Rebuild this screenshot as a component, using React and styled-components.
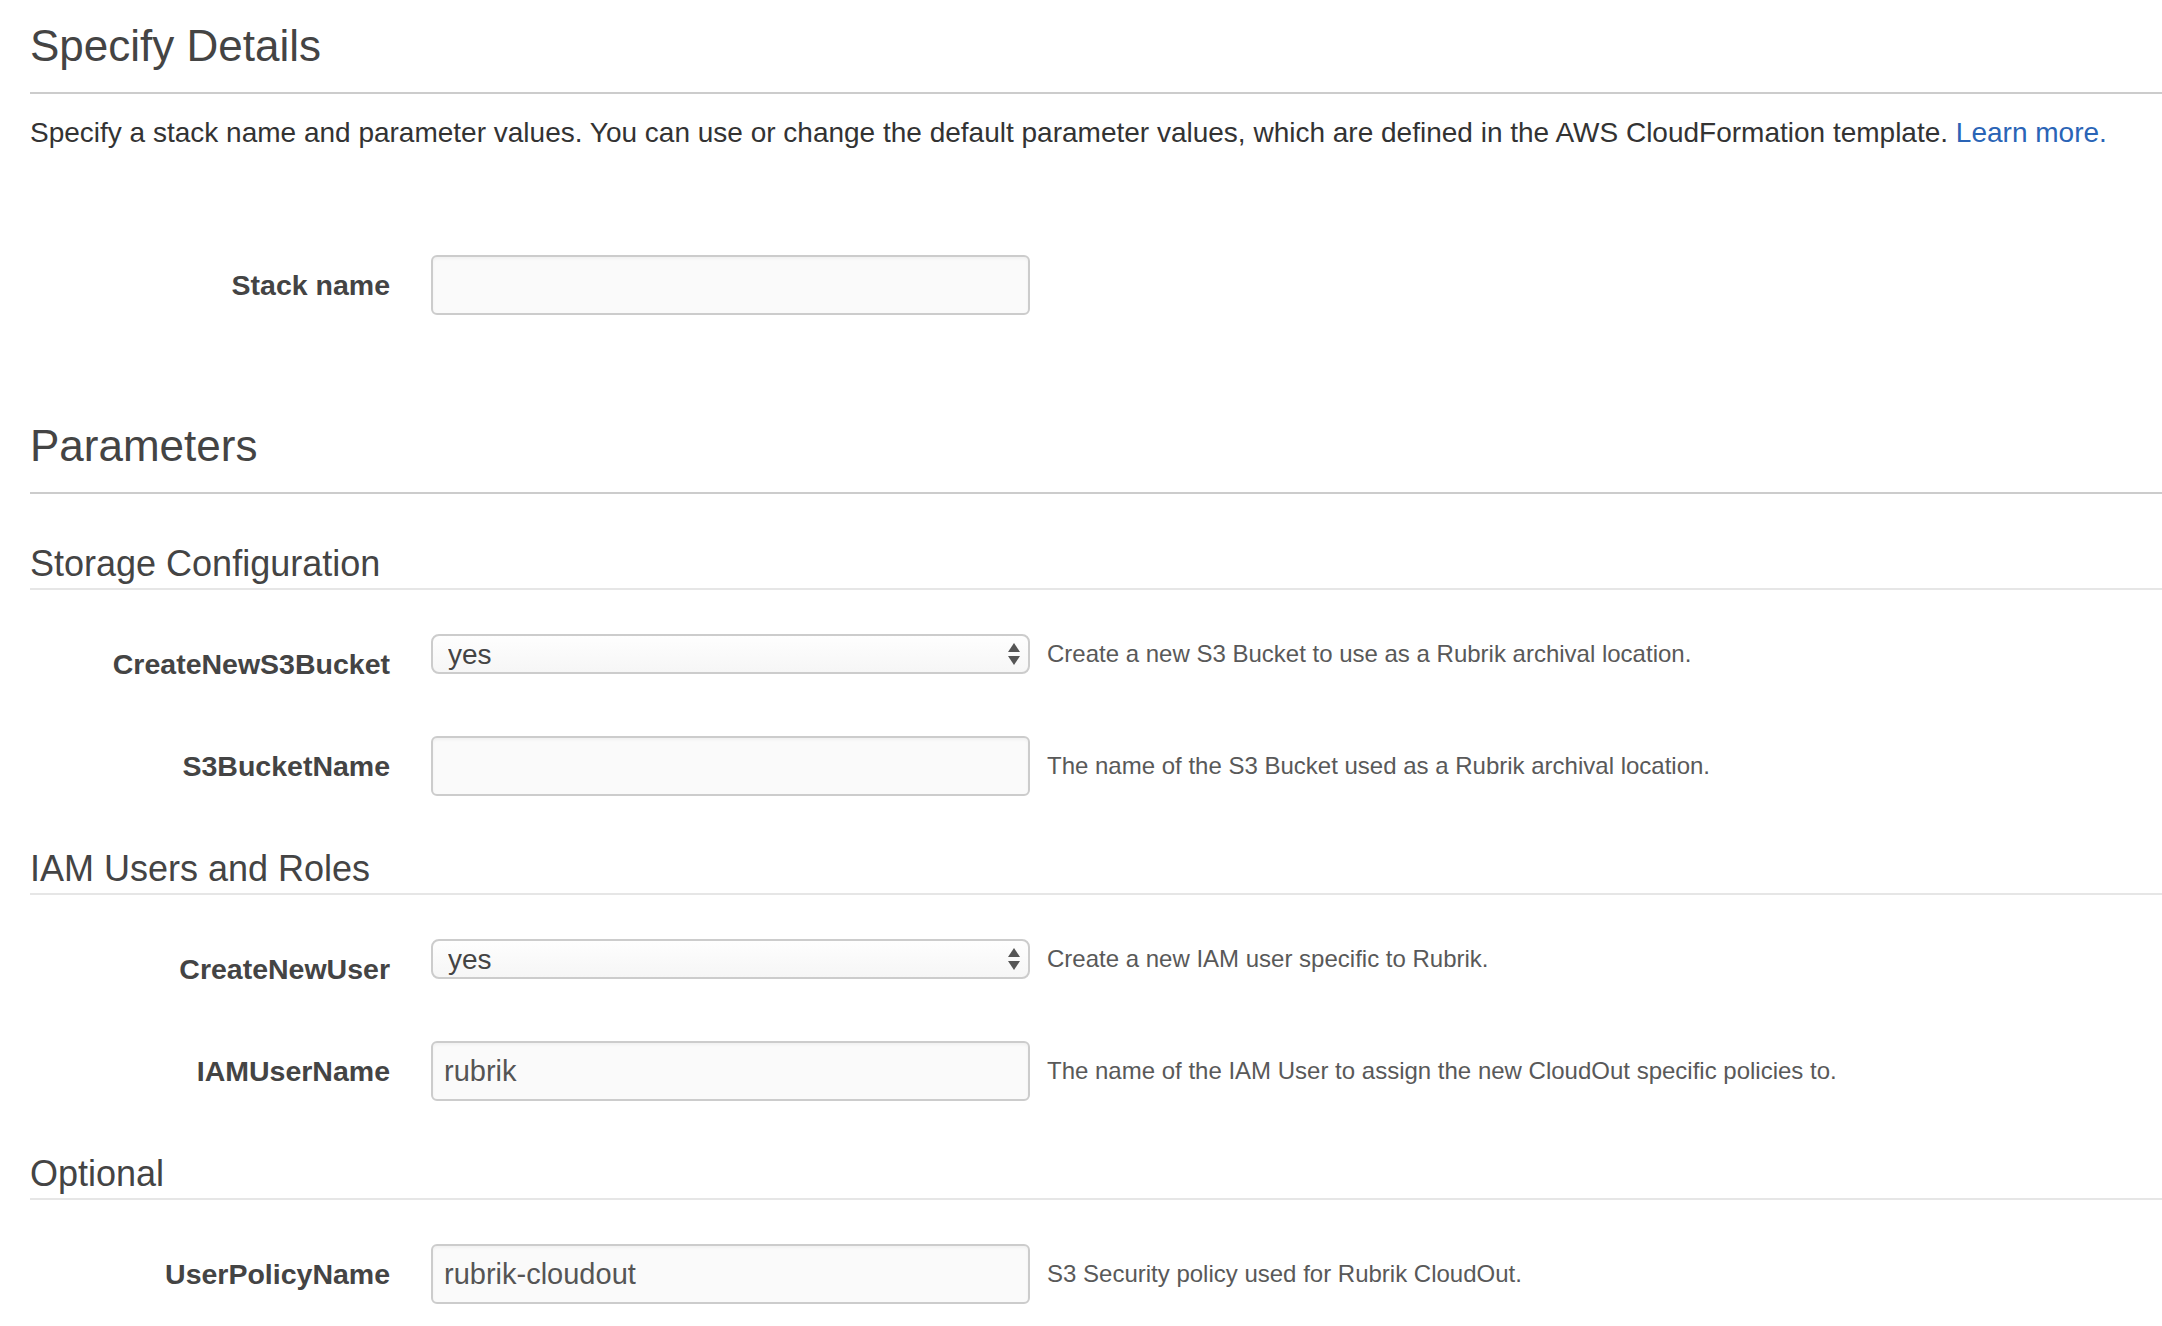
import styled, { createGlobalStyle } from "styled-components";

const GlobalStyle = createGlobalStyle`
  html, body {
    margin: 0;
    padding: 0;
    background: #ffffff;
  }
  body {
    font-family: "Liberation Sans", Arial, Helvetica, sans-serif;
    color: #333;
  }
`;

const Page = styled.main`
  padding: 21px 0 40px 30px;
`;

const SectionTitle = styled.h2`
  margin: ${(p) => p.$top || 0}px 0 0 0;
  padding-bottom: 21px;
  font-size: 44px;
  font-weight: normal;
  line-height: 50px;
  color: #444;
  border-bottom: 2px solid #cccccc;
`;

const Intro = styled.p`
  margin: 20px 0 0 0;
  font-size: 28px;
  line-height: 38px;
  color: #333;
`;

const LearnMore = styled.a`
  color: #2a64b6;
  text-decoration: none;
`;

const GroupTitle = styled.h3`
  margin: ${(p) => p.$top || 53}px 0 44px 0;
  padding-bottom: 4px;
  font-size: 36px;
  font-weight: normal;
  line-height: 40px;
  color: #444;
  border-bottom: 2px solid #e6e6e6;
`;

const Fields = styled.div`
  display: flex;
  flex-direction: column;
  gap: 42px;
  margin-top: ${(p) => p.$top || 0}px;
`;

const Row = styled.div`
  display: flex;
  align-items: flex-start;
`;

const Label = styled.label`
  flex-shrink: 0;
  width: 360px;
  height: 60px;
  margin-right: 41px;
  display: flex;
  align-items: center;
  justify-content: flex-end;
  font-size: 28.5px;
  font-weight: bold;
  color: #444;
`;

const Control = styled.div`
  display: flex;
  align-items: center;
  gap: 17px;
`;

const TextInput = styled.input`
  box-sizing: border-box;
  width: 599px;
  height: 60px;
  padding: 0 11px;
  border: 2px solid #cccccc;
  border-radius: 6px;
  background: #fafafa;
  box-shadow: inset 0 2px 3px rgba(0, 0, 0, 0.04);
  font-family: inherit;
  font-size: 29px;
  color: #555;
  outline: none;
`;

const SelectBox = styled.div`
  position: relative;
  width: 599px;
  height: 40px;
`;

const Select = styled.select`
  box-sizing: border-box;
  width: 100%;
  height: 100%;
  padding: 0 40px 0 15px;
  appearance: none;
  -webkit-appearance: none;
  border: 2px solid #cccccc;
  border-radius: 8px;
  background: linear-gradient(#fefefe, #f6f6f6);
  font-family: inherit;
  font-size: 28px;
  color: #444;
  outline: none;
`;

const Arrows = styled.svg`
  position: absolute;
  right: 7px;
  top: 6px;
  pointer-events: none;
`;

const Hint = styled.span`
  font-size: 24px;
  line-height: 30px;
  color: #595959;
  white-space: nowrap;
`;

function SelectArrows() {
  return (
    <Arrows width="18" height="28" viewBox="0 0 18 28">
      <path d="M3 12 L9 3 L15 12 Z" fill="#555" />
      <path d="M3 16 L9 25 L15 16 Z" fill="#555" />
    </Arrows>
  );
}

function Field({ label, type, value, hint }) {
  return (
    <Row>
      <Label>{label}</Label>
      <Control>
        {type === "select" ? (
          <SelectBox>
            <Select defaultValue={value}>
              <option value="yes">yes</option>
              <option value="no">no</option>
            </Select>
            <SelectArrows />
          </SelectBox>
        ) : (
          <TextInput type="text" defaultValue={value} />
        )}
        {hint && <Hint>{hint}</Hint>}
      </Control>
    </Row>
  );
}

export default function App() {
  return (
    <>
      <GlobalStyle />
      <Page>
        <SectionTitle>Specify Details</SectionTitle>
        <Intro>
          Specify a stack name and parameter values. You can use or change the default parameter
          values, which are defined in the AWS CloudFormation template.{" "}
          <LearnMore href="#">Learn more.</LearnMore>
        </Intro>

        <Fields $top={103}>
          <Field label="Stack name" value="" />
        </Fields>

        <SectionTitle $top={106}>Parameters</SectionTitle>

        <GroupTitle $top={50}>Storage Configuration</GroupTitle>
        <Fields>
          <Field
            label="CreateNewS3Bucket"
            type="select"
            value="yes"
            hint="Create a new S3 Bucket to use as a Rubrik archival location."
          />
          <Field
            label="S3BucketName"
            value=""
            hint="The name of the S3 Bucket used as a Rubrik archival location."
          />
        </Fields>

        <GroupTitle>IAM Users and Roles</GroupTitle>
        <Fields>
          <Field
            label="CreateNewUser"
            type="select"
            value="yes"
            hint="Create a new IAM user specific to Rubrik."
          />
          <Field
            label="IAMUserName"
            value="rubrik"
            hint="The name of the IAM User to assign the new CloudOut specific policies to."
          />
        </Fields>

        <GroupTitle>Optional</GroupTitle>
        <Fields>
          <Field
            label="UserPolicyName"
            value="rubrik-cloudout"
            hint="S3 Security policy used for Rubrik CloudOut."
          />
        </Fields>
      </Page>
    </>
  );
}
